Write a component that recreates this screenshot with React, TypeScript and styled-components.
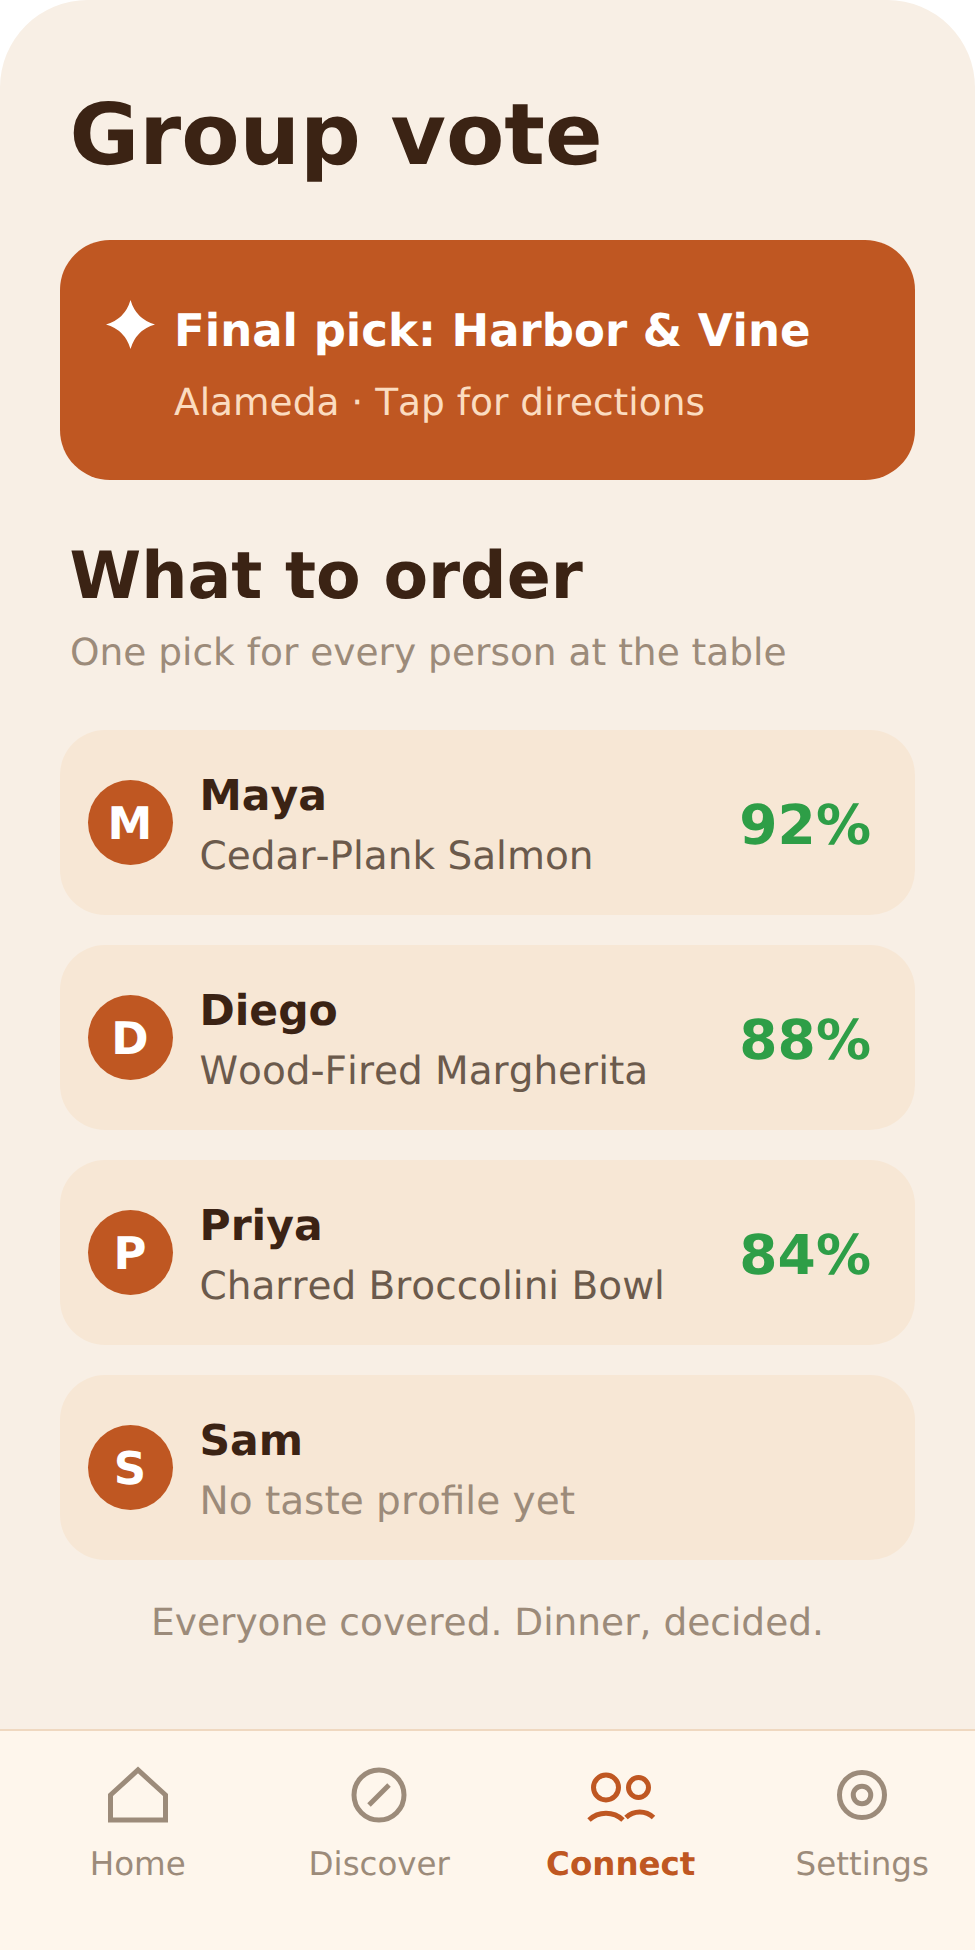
import styled, { createGlobalStyle } from "styled-components";

const GlobalStyle = createGlobalStyle`
  html, body {
    margin: 0;
    padding: 0;
    background: #ffffff;
    font-family: "DejaVu Sans", sans-serif;
    text-rendering: geometricPrecision;
    font-kerning: none;
  }
`;

const PEOPLE = [
  { initial: "M", name: "Maya", dish: "Cedar-Plank Salmon", match: "92%" },
  { initial: "D", name: "Diego", dish: "Wood-Fired Margherita", match: "88%" },
  { initial: "P", name: "Priya", dish: "Charred Broccolini Bowl", match: "84%" },
  { initial: "S", name: "Sam", dish: "No taste profile yet", match: "" },
];

const TABS = [
  { label: "Home", icon: <HomeIcon /> },
  { label: "Discover", icon: <DiscoverIcon /> },
  { label: "Connect", icon: <ConnectIcon />, active: true },
  { label: "Settings", icon: <SettingsIcon /> },
];

function HomeIcon() {
  return (
    <svg width="70" height="70" viewBox="0 0 70 70" fill="none">
      <path d="M7.5 60V35L35 10L62.5 35V60Z" stroke="#9c8b7a" strokeWidth="5" />
    </svg>
  );
}

function DiscoverIcon() {
  return (
    <svg width="70" height="70" viewBox="0 0 70 70" fill="none" stroke="#9c8b7a" strokeWidth="5">
      <circle cx="35" cy="35" r="25" />
      <path d="M25 45L45 25" />
    </svg>
  );
}

function ConnectIcon() {
  return (
    <svg width="70" height="70" viewBox="0 0 70 70" fill="none" stroke="#bf5722" strokeWidth="5">
      <circle cx="20" cy="27.5" r="12.5" />
      <circle cx="52.5" cy="27.5" r="10" />
      <path d="M3 60A25 25 0 0 1 37 60" />
      <path d="M40 57.5A20 20 0 0 1 67.5 57.5" />
    </svg>
  );
}

function SettingsIcon() {
  return (
    <svg width="70" height="70" viewBox="0 0 70 70" fill="none" stroke="#9c8b7a" strokeWidth="5">
      <circle cx="35" cy="35" r="22.5" />
      <circle cx="35" cy="35" r="8.75" />
    </svg>
  );
}

export default function App() {
  return (
    <>
      <GlobalStyle />
      <S.Screen>
        <S.Content>
          <S.Title>Group vote</S.Title>
          <S.Banner>
            <S.BannerTop>
              <S.Sparkle width="49" height="49" viewBox="0 0 49 49">
                <path d="M24.5 0Q30 19 49 24.5Q30 30 24.5 49Q19 30 0 24.5Q19 19 24.5 0Z" fill="#ffffff" />
              </S.Sparkle>
              <S.BannerTitle>Final pick: Harbor &amp; Vine</S.BannerTitle>
            </S.BannerTop>
            <S.BannerSub>Alameda · Tap for directions</S.BannerSub>
          </S.Banner>
          <S.SectionTitle>What to order</S.SectionTitle>
          <S.SectionSub>One pick for every person at the table</S.SectionSub>
          <S.List>
            {PEOPLE.map((person) => (
              <S.Card key={person.name}>
                <S.Avatar>{person.initial}</S.Avatar>
                <S.Info>
                  <S.Name>{person.name}</S.Name>
                  <S.Dish $muted={!person.match}>{person.dish}</S.Dish>
                </S.Info>
                {person.match && <S.Match>{person.match}</S.Match>}
              </S.Card>
            ))}
          </S.List>
          <S.Footer>Everyone covered. Dinner, decided.</S.Footer>
        </S.Content>
        <S.TabBar>
          {TABS.map((tab) => (
            <S.Tab key={tab.label}>
              <S.TabIcon>{tab.icon}</S.TabIcon>
              <S.TabLabel $active={tab.active}>{tab.label}</S.TabLabel>
            </S.Tab>
          ))}
        </S.TabBar>
      </S.Screen>
    </>
  );
}

const S = {
  Screen: styled.div`
    width: 975px;
    height: 1950px;
    display: flex;
    flex-direction: column;
    background: #f8efe5;
    border-radius: 87.5px 87.5px 0 0;
    overflow: hidden;
  `,

  Content: styled.main`
    flex: 1;
    display: flex;
    flex-direction: column;
    padding: 86px 60px 0;
  `,

  Title: styled.h1`
    margin: 0 0 0 9.5px;
    font-size: 85px;
    line-height: 100px;
    font-weight: bold;
    color: #3b2314;
  `,

  Banner: styled.section`
    margin-top: 54px;
    height: 240px;
    box-sizing: border-box;
    padding: 53px 42px 0;
    background: #bf5722;
    border-radius: 50px;
  `,

  BannerTop: styled.div`
    min-height: 70px;
    display: flex;
    align-items: center;
  `,

  Sparkle: styled.svg`
    flex-shrink: 0;
    margin: 0 19.5px 8px 3.5px;
  `,

  BannerTitle: styled.span`
    font-size: 45px;
    font-weight: bold;
    color: #ffffff;
    padding-top: 4px;
  `,

  BannerSub: styled.div`
    margin: 14px 0 0 72px;
    font-size: 37.5px;
    line-height: 50px;
    color: #fbdcc0;
  `,

  SectionTitle: styled.h2`
    margin: 57px 0 0 9.5px;
    font-size: 65px;
    line-height: 80px;
    font-weight: bold;
    color: #3b2314;
  `,

  SectionSub: styled.p`
    margin: 10px 0 0 10px;
    font-size: 37.5px;
    line-height: 50px;
    color: #9c8b7a;
  `,

  List: styled.div`
    margin-top: 53px;
    display: flex;
    flex-direction: column;
    gap: 30px;
  `,

  Card: styled.article`
    height: 185px;
    box-sizing: border-box;
    padding: 0 44px 0 27.5px;
    display: flex;
    align-items: center;
    background: #f7e7d5;
    border-radius: 45px;
  `,

  Avatar: styled.div`
    width: 85px;
    height: 85px;
    flex-shrink: 0;
    display: flex;
    align-items: center;
    justify-content: center;
    padding-top: 2px;
    box-sizing: border-box;
    border-radius: 50%;
    background: #bf5722;
    color: #ffffff;
    font-size: 45px;
    font-weight: bold;
  `,

  Info: styled.div`
    flex: 1;
    margin-left: 27px;
    display: flex;
    flex-direction: column;
    gap: 10px;
    padding-top: 9px;
  `,

  Name: styled.div`
    font-size: 42.5px;
    line-height: 50px;
    font-weight: bold;
    color: #3b2314;
  `,

  Dish: styled.div<{ $muted: boolean }>`
    font-size: 39px;
    line-height: 50px;
    color: ${(p) => (p.$muted ? "#9c8b7a" : "#6b5a4c")};
  `,

  Match: styled.div`
    font-size: 55px;
    font-weight: bold;
    color: #2e9e47;
    padding-top: 5px;
  `,

  Footer: styled.p`
    margin: 37px 0 0;
    font-size: 37.5px;
    line-height: 50px;
    text-align: center;
    color: #9c8b7a;
  `,

  TabBar: styled.nav`
    height: 221px;
    box-sizing: border-box;
    flex-shrink: 0;
    display: grid;
    grid-template-columns: repeat(4, 241.5px);
    padding-left: 17px;
    background: #fef6ec;
    border-top: 2px solid #efd8c0;
  `,

  Tab: styled.div`
    display: flex;
    flex-direction: column;
    align-items: center;
    padding-top: 29px;
  `,

  TabIcon: styled.div`
    height: 70px;
    display: flex;
    justify-content: center;
  `,

  TabLabel: styled.span<{ $active?: boolean }>`
    margin-top: 15px;
    font-size: 32.5px;
    font-weight: ${(p) => (p.$active ? "bold" : "normal")};
    color: ${(p) => (p.$active ? "#bf5722" : "#9c8b7a")};
  `,
};
